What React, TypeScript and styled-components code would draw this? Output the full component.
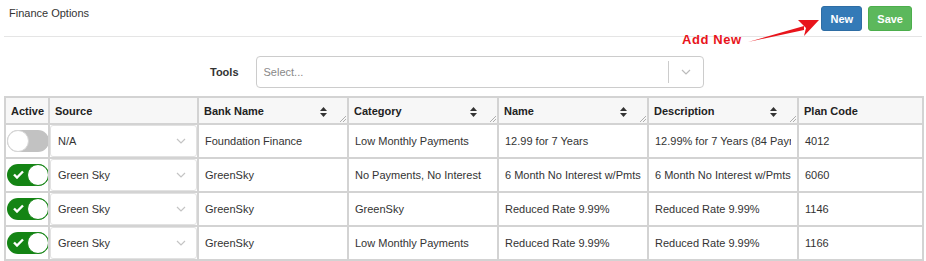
import styled, { createGlobalStyle } from "styled-components";

const Global = createGlobalStyle`
    body {
        margin: 0;
        background: #fff;
        font-family: "Liberation Sans", Arial, sans-serif;
        color: #333;
    }
`;

const Page = styled.div`
    position: relative;
    width: 918px;
    padding: 0 4px;
    font-size: 11px;
`;

const TopBar = styled.div`
    display: flex;
    justify-content: space-between;
    align-items: flex-start;
    height: 36px;
    border-bottom: 1px solid #e5e5e5;
`;

const Title = styled.div`
    padding: 7px 0 0 5px;
    font-size: 11px;
    color: #333;
`;

const Buttons = styled.div`
    display: flex;
    gap: 6px;
    padding: 6px 10px 0 0;
`;

const Button = styled.button<{ $tone: "primary" | "success" }>`
    min-width: 41px;
    height: 25px;
    padding: 0 8px;
    border-radius: 3px;
    border: 1px solid ${(p) => (p.$tone === "primary" ? "#2e6da4" : "#4cae4c")};
    background: ${(p) => (p.$tone === "primary" ? "#337ab7" : "#5cb85c")};
    color: #fff;
    font-family: inherit;
    font-size: 11px;
    font-weight: bold;
`;

const Note = styled.div`
    position: absolute;
    left: 682px;
    top: 32px;
    color: #e8141b;
    font-size: 13px;
    font-weight: bold;
    letter-spacing: 0.6px;
`;

const Arrow = styled.svg`
    position: absolute;
    left: 746px;
    top: 12px;
`;

const ToolsRow = styled.div`
    display: flex;
    align-items: center;
    gap: 17px;
    padding: 19px 0 0 206px;
`;

const Label = styled.div`
    font-weight: bold;
`;

const Select = styled.div`
    display: flex;
    align-items: center;
    width: 446px;
    height: 30px;
    border: 1px solid #ccc;
    border-radius: 4px;
`;

const Placeholder = styled.div`
    flex: 1;
    padding-left: 7px;
    color: #888;
`;

const Indicator = styled.div`
    display: flex;
    align-items: center;
    justify-content: center;
    width: 34px;
    height: 22px;
    border-left: 1px solid #ccc;
`;

const Table = styled.table`
    margin-top: 8px;
    width: 918px;
    table-layout: fixed;
    border-collapse: collapse;
    font-size: 11px;
`;

const Th = styled.th`
    position: relative;
    height: 25px;
    padding: 0 5px;
    text-align: left;
    background: #f7f7f7;
    border: 2px solid #d3d3d3;
    font-weight: bold;
    color: #222;
`;

const Td = styled.td<{ $flush?: boolean }>`
    height: 30px;
    padding: ${(p) => (p.$flush ? "0" : "0 6px")};
    border: 2px solid #d3d3d3;
    white-space: nowrap;
    overflow: hidden;
`;

const Clip = styled.div`
    overflow: hidden;
    white-space: nowrap;
    text-overflow: clip;
`;

const Sort = styled.svg`
    position: absolute;
    right: 20px;
    top: 9px;
`;

const Grip = styled.svg`
    position: absolute;
    right: 1px;
    bottom: 1px;
`;

const Toggle = styled.div<{ $on: boolean }>`
    position: relative;
    width: 42px;
    height: 22px;
    margin-left: 1px;
    border-radius: 11px;
    background: ${(p) => (p.$on ? "#148414" : "#c2c2c2")};
    box-sizing: border-box;
`;

const Knob = styled.div<{ $on: boolean }>`
    position: absolute;
    top: 0;
    ${(p) => (p.$on ? "right: 0;" : "left: 0;")}
    width: 22px;
    height: 22px;
    border-radius: 50%;
    background: #fff;
    box-sizing: border-box;
    border: 1.5px solid ${(p) => (p.$on ? "#148414" : "#d6d6d6")};
`;

const Check = styled.svg`
    position: absolute;
    left: 6px;
    top: 6px;
`;

const CellSelect = styled.div`
    display: flex;
    align-items: center;
    justify-content: space-between;
    height: 30px;
    padding: 0 10px 0 7px;
    background: #fff;
    border: 1px solid #e2e2e2;
    border-radius: 3px;
`;

const COLS = [44, 149, 150, 150, 150, 150, 125];

const HEADERS = [
    { label: "Active" },
    { label: "Source" },
    { label: "Bank Name", sort: true },
    { label: "Category", sort: true },
    { label: "Name", sort: true },
    { label: "Description", sort: true },
    { label: "Plan Code" },
];

const ROWS = [
    { on: false, source: "N/A", bank: "Foundation Finance", category: "Low Monthly Payments", name: "12.99 for 7 Years", desc: "12.99% for 7 Years (84 Payments)", code: "4012" },
    { on: true, source: "Green Sky", bank: "GreenSky", category: "No Payments,  No Interest", name: "6 Month No Interest w/Pmts", desc: "6 Month No Interest w/Pmts", code: "6060" },
    { on: true, source: "Green Sky", bank: "GreenSky", category: "GreenSky", name: "Reduced Rate 9.99%", desc: "Reduced Rate 9.99%", code: "1146" },
    { on: true, source: "Green Sky", bank: "GreenSky", category: "Low Monthly Payments", name: "Reduced Rate 9.99%", desc: "Reduced Rate 9.99%", code: "1166" },
];

function Chevron({ color }: { color: string }) {
    return (
        <svg width="10" height="6" viewBox="0 0 10 6">
            <path d="M1 1l4 4 4-4" fill="none" stroke={color} strokeWidth="1.2" />
        </svg>
    );
}

export default function App() {
    return (
        <Page>
            <Global />
            <TopBar>
                <Title>Finance Options</Title>
                <Buttons>
                    <Button $tone="primary">New</Button>
                    <Button $tone="success">Save</Button>
                </Buttons>
            </TopBar>
            <Note>Add New</Note>
            <Arrow width="76" height="36" viewBox="0 0 76 36">
                <path d="M2 30 L58 14 L58 18 Z" fill="#e8141b" />
                <path d="M52 8 L73 8 L58 24 L60 16 Z" fill="#e8141b" />
            </Arrow>
            <ToolsRow>
                <Label>Tools</Label>
                <Select>
                    <Placeholder>Select...</Placeholder>
                    <Indicator>
                        <Chevron color="#bbb" />
                    </Indicator>
                </Select>
            </ToolsRow>
            <Table>
                <colgroup>
                    {COLS.map((w, i) => (
                        <col key={i} style={{ width: w }} />
                    ))}
                </colgroup>
                <thead>
                    <tr>
                        {HEADERS.map((h) => (
                            <Th key={h.label}>
                                {h.label}
                                {h.sort && (
                                    <Sort width="7" height="10" viewBox="0 0 7 10">
                                        <path d="M3.5 0L7 4H0z M3.5 10L7 6H0z" fill="#333" />
                                    </Sort>
                                )}
                                {h.sort && (
                                    <Grip width="7" height="7" viewBox="0 0 7 7">
                                        <path d="M1 7L7 1 M4 7L7 4" stroke="#999" strokeWidth="0.8" />
                                    </Grip>
                                )}
                            </Th>
                        ))}
                    </tr>
                </thead>
                <tbody>
                    {ROWS.map((r) => (
                        <tr key={r.code}>
                            <Td $flush>
                                <Toggle $on={r.on}>
                                    {r.on && (
                                        <Check width="11" height="9" viewBox="0 0 11 9">
                                            <path d="M1 4.5l3 3 6-6" fill="none" stroke="#fff" strokeWidth="2.4" />
                                        </Check>
                                    )}
                                    <Knob $on={r.on} />
                                </Toggle>
                            </Td>
                            <Td $flush>
                                <CellSelect>
                                    {r.source}
                                    <Chevron color="#c4c4c4" />
                                </CellSelect>
                            </Td>
                            <Td>{r.bank}</Td>
                            <Td>{r.category}</Td>
                            <Td>
                                <Clip>{r.name}</Clip>
                            </Td>
                            <Td>
                                <Clip>{r.desc}</Clip>
                            </Td>
                            <Td>{r.code}</Td>
                        </tr>
                    ))}
                </tbody>
            </Table>
        </Page>
    );
}
